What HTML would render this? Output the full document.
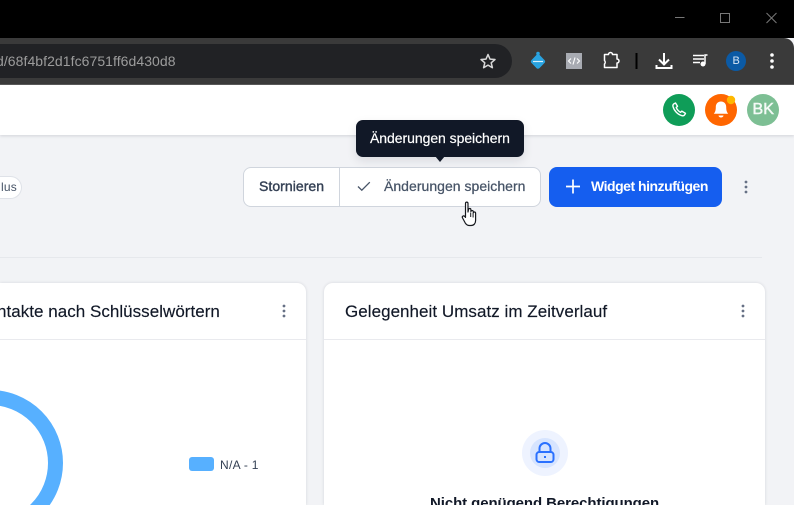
<!DOCTYPE html>
<html lang="de"><head><meta charset="utf-8"><title>Dashboard</title>
<style>
html,body{margin:0;padding:0;width:794px;height:505px;overflow:hidden;background:#f2f3f6}
body{font-family:"Liberation Sans",sans-serif}
#r{position:relative;width:794px;height:505px;overflow:hidden;background:#f2f3f6}
.a{position:absolute}
.c{position:absolute;overflow:hidden}
.t{position:absolute;white-space:nowrap;line-height:20px}
svg{position:absolute;overflow:visible}
</style></head><body><div id="r">
<div class="a" style="left:0;top:0;width:794px;height:38px;background:#000"></div>
<div class="a" style="left:0;top:38px;width:794px;height:46px;background:#3a3a3a;border-top-right-radius:10px"></div>
<div class="a" style="left:0;top:84px;width:794px;height:1px;background:#5a5a5a"></div>
<div class="a" style="left:0;top:44px;width:512px;height:34px;background:#212225;border-radius:0 17px 17px 0"></div>
<div class="c" style="left:0;top:51px;width:300px;height:20px"><div class="t" style="left:-4px;top:0;font-size:14px;color:#9c9c9c;letter-spacing:.06px">d/68f4bf2d1fc6751ff6d430d8</div></div>

<svg style="left:0;top:0" width="794" height="84" fill="none">
<path d="M675 17.500h9.500" stroke="#777"/>
<rect x="720.500" y="13.500" width="9" height="9" stroke="#777"/>
<path d="M766.500 13l10 10M776.500 13l-10 10" stroke="#777"/>
<path d="M488 54.500l2 4.600 5 .4-3.800 3.300 1.200 4.900-4.400-2.600-4.400 2.600 1.200-4.900-3.800-3.300 5-.4z" stroke="#d8d8d8" stroke-width="1.500" stroke-linejoin="round"/>
<path d="M538 56.500l4.800 5-4.800 5-4.800-5z" fill="#29a3e0" stroke="#29a3e0" stroke-width="4.500" stroke-linejoin="round"/><circle cx="538" cy="53.500" r="1.800" fill="#29a3e0"/>
<path d="M533 61.500h10" stroke="#d8f0fb" stroke-width="1.200"/>
<rect x="566" y="53" width="16" height="16" fill="#a8abb2"/>
<path d="M571 58.500l-2.500 2.500 2.500 2.500M577 58.500l2.500 2.500-2.500 2.500M575 57.500l-2 7" stroke="#fff" stroke-width="1.100"/>
<path d="M604 54.500h4a2 2 0 0 1 4 0h4.500v4.500a2 2 0 0 1 0 4v4.500h-12.500v-3.500a2.500 2.500 0 0 0 0-3.500z" stroke="#fff" stroke-width="1.500" stroke-linejoin="round" transform="translate(.5 0)"/>
<path d="M636.500 53v16" stroke="#000" stroke-width="2"/>
<path d="M664 53v11M659 59.500l5 5 5-5" stroke="#fff" stroke-width="2"/>
<path d="M656.500 65v3h15v-3" stroke="#fff" stroke-width="2"/>
<path d="M693 55.500h11M693 59h11M693 62.500h7" stroke="#fff" stroke-width="1.400"/>
<circle cx="703" cy="64" r="2.500" fill="#fff"/><path d="M705 64v-9h2.500" stroke="#fff" stroke-width="1.500"/>
<circle cx="736" cy="61" r="10" fill="#0b5aa5"/>
<circle cx="772" cy="55" r="1.800" fill="#fff"/><circle cx="772" cy="61" r="1.800" fill="#fff"/><circle cx="772" cy="67" r="1.800" fill="#fff"/>
</svg>
<div class="t" style="left:732.500px;top:51px;font-size:11px;color:#d7e6f5">B</div>

<div class="a" style="left:0;top:85px;width:794px;height:50px;background:#fff;box-shadow:0 1px 3px rgba(16,24,40,.14)"></div>
<svg style="left:0;top:85px" width="794" height="50" fill="none">
<circle cx="679" cy="25" r="16" fill="#0f9d58"/>
<path d="M674.500 18.500c-1.200.5-1.800 1.700-1.500 3 1 4 4.500 8 9 9.200 1.200.3 2.300-.2 2.900-1.300l.6-1.100-3.700-2.200-1.300 1.200c-1.800-1-3.500-2.900-4.300-4.800l1.300-1.200-2-3.300z" stroke="#fff" stroke-width="1.400" stroke-linejoin="round"/>
<circle cx="721" cy="25" r="16" fill="#ff6600"/>
<path d="M721 16.500c-3.400 0-5.200 2.500-5.200 5.500 0 3.500-.6 5-2 6.800h14.400c-1.400-1.800-2-3.300-2-6.800 0-3-1.800-5.500-5.200-5.500z" fill="#fff"/>
<path d="M718.500 30.500a2.500 2 0 0 0 5 0z" fill="#fff"/>
<circle cx="731" cy="15" r="4.200" fill="#ffb800"/>
<circle cx="763" cy="25" r="16" fill="#7dbf94"/>
</svg>
<div class="t" style="left:752.500px;top:100px;font-size:16px;color:#fff;opacity:.92;letter-spacing:.1px;-webkit-text-stroke:.5px #fff">BK</div>

<div class="a" style="left:0;top:176px;width:21px;height:21px;background:#fff;border:1px solid #dfe2e8;border-left:0;border-radius:0 12px 12px 0"></div>
<div class="t" style="left:1px;top:177px;font-size:12px;color:#475467;letter-spacing:.2px">lus</div>

<div class="a" style="left:243px;top:167px;width:296px;height:38px;background:#fff;border:1px solid #d0d5dd;border-radius:8px"></div>
<div class="a" style="left:339px;top:168px;width:1px;height:38px;background:#d0d5dd"></div>
<div class="t" style="left:259px;top:176px;font-size:14px;color:#344054;letter-spacing:.05px;-webkit-text-stroke:.4px #344054">Stornieren</div>
<svg style="left:356px;top:178px" width="16" height="16" fill="none"><path d="M2 8.500l3.800 3.700 8-8" stroke="#475467" stroke-width="1.300"/></svg>
<div class="t" style="left:384px;top:176px;font-size:14px;color:#475467;letter-spacing:.03px;-webkit-text-stroke:.25px #475467">Änderungen speichern</div>

<div class="a" style="left:549px;top:167px;width:173px;height:40px;background:#155eef;border-radius:8px"></div>
<svg style="left:566px;top:179px" width="15" height="15" fill="none"><path d="M7 .5v14M0 7.500h14" stroke="#fff" stroke-width="1.700"/></svg>
<div class="t" style="left:591px;top:176px;font-size:14px;font-weight:bold;color:#fff;letter-spacing:-.48px">Widget hinzufügen</div>
<svg style="left:741px;top:180px" width="10" height="14" fill="#667085"><circle cx="5" cy="2" r="1.400"/><circle cx="5" cy="7" r="1.400"/><circle cx="5" cy="12" r="1.400"/></svg>

<div class="a" style="left:356px;top:120px;width:168px;height:37px;background:#111827;border-radius:7px;box-shadow:0 4px 10px rgba(16,24,40,.1)"></div>
<div class="a" style="left:435px;top:156px;width:0;height:0;border-left:5.500px solid transparent;border-right:5.500px solid transparent;border-top:6px solid #111827"></div>
<div class="t" style="left:370px;top:128px;font-size:14px;color:#fff;letter-spacing:-.05px;-webkit-text-stroke:.2px #fff">Änderungen speichern</div>

<svg style="left:462px;top:201px" width="18" height="27"><path d="M3.500 2.500c0-1.800 2.500-1.800 2.500 0v8.500l.5-2.500c.3-1.500 2.400-1.300 2.400.2v1.800c.3-1.400 2.400-1.200 2.400.3v1c.4-1.200 2.300-1 2.300.4v7.300c0 2.800-1.700 5-4.500 5h-1.700c-2 0-3.200-1-4.200-2.600l-2.700-5c-.8-1.500 1-2.700 2.200-1.500l.8 1z" fill="#fff" stroke="#17191e" stroke-width="1.200" stroke-linejoin="round"/><path d="M8.700 11.500v4.500M11.100 12v4.500" stroke="#17191e"/></svg>

<div class="a" style="left:0;top:257px;width:762px;height:1px;background:#e6e8ec"></div>

<div class="a" style="left:0;top:283px;width:306px;height:222px;background:#fff;border-radius:0 9px 0 0;box-shadow:0 0 3px rgba(16,24,40,.13)"></div>
<div class="a" style="left:324px;top:283px;width:441px;height:222px;background:#fff;border-radius:9px 9px 0 0;box-shadow:0 0 3px rgba(16,24,40,.13)"></div>
<div class="a" style="left:0;top:339px;width:306px;height:1px;background:#e9eaee"></div>
<div class="a" style="left:324px;top:339px;width:441px;height:1px;background:#e9eaee"></div>
<div class="c" style="left:0;top:302px;width:270px;height:20px"><div class="t" style="left:-3px;top:0;font-size:17px;color:#111827;letter-spacing:.03px;-webkit-text-stroke:.15px #111827">ntakte nach Schlüsselwörtern</div></div>
<div class="t" style="left:345px;top:302px;font-size:17px;color:#111827;letter-spacing:.04px;-webkit-text-stroke:.15px #111827">Gelegenheit Umsatz im Zeitverlauf</div>
<svg style="left:279px;top:304px" width="10" height="14" fill="#667085"><circle cx="5" cy="2" r="1.400"/><circle cx="5" cy="7" r="1.400"/><circle cx="5" cy="12" r="1.400"/></svg>
<svg style="left:738px;top:304px" width="10" height="14" fill="#667085"><circle cx="5" cy="2" r="1.400"/><circle cx="5" cy="7" r="1.400"/><circle cx="5" cy="12" r="1.400"/></svg>

<svg style="left:0;top:340px;overflow:hidden" width="70" height="165" fill="none"><circle cx="-10" cy="123" r="65.500" stroke="#57b0ff" stroke-width="15"/></svg>
<div class="a" style="left:189px;top:457px;width:25px;height:14px;background:#57b0ff;border-radius:3px"></div>
<div class="t" style="left:220px;top:455px;font-size:12px;color:#344054;letter-spacing:.3px">N/A - 1</div>

<svg style="left:522px;top:430px" width="46" height="46" fill="none">
<circle cx="23" cy="23" r="23" fill="#eef3ff"/><circle cx="23" cy="23" r="15" fill="#d6e4ff"/>
<rect x="14.500" y="22" width="17" height="10" rx="2.800" stroke="#2970ff" stroke-width="2"/>
<path d="M17.500 22v-3.500a5.500 5.500 0 0 1 11 0v3.500" stroke="#2970ff" stroke-width="2"/>
<path d="M23 26v2" stroke="#2970ff" stroke-width="2"/>
</svg>
<div class="c" style="left:425px;top:494px;width:240px;height:11px"><div class="t" style="left:5px;top:0;font-size:15px;font-weight:bold;color:#111827;letter-spacing:-.09px">Nicht genügend Berechtigungen</div></div>
</div></body></html>
